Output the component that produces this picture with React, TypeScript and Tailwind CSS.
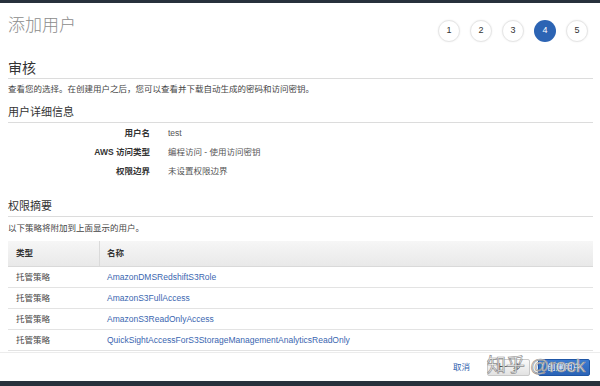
import React from 'react';

const policies = [
  'AmazonDMSRedshiftS3Role',
  'AmazonS3FullAccess',
  'AmazonS3ReadOnlyAccess',
  'QuickSightAccessForS3StorageManagementAnalyticsReadOnly',
];

const details = [
  { label: '用户名', value: 'test' },
  { label: 'AWS 访问类型', value: '编程访问 - 使用访问密钥' },
  { label: '权限边界', value: '未设置权限边界' },
];

function Steps({ current }: { current: number }) {
  return (
    <div className="flex gap-[10px]">
      {[1, 2, 3, 4, 5].map((n) => (
        <div
          key={n}
          className={`w-[22px] h-[22px] rounded-full flex items-center justify-center text-[9px] ${
            n === current
              ? 'bg-[#2c64b4] text-white'
              : 'bg-white text-[#333] border border-[#e6e6e6] shadow-[0_0_2px_rgba(0,0,0,0.08)]'
          }`}
        >
          {n}
        </div>
      ))}
    </div>
  );
}

export default function App() {
  return (
    <div
      className="relative w-[600px] h-[386px] bg-white flex flex-col overflow-hidden text-[#444]"
      style={{ fontFamily: '"Liberation Sans", "Noto Sans CJK SC", sans-serif' }}
    >
      <div className="h-[3px] bg-[#28313c] shrink-0" />

      {/* header */}
      <div className="h-[47px] flex justify-between items-start pl-[8px] pr-[12px] shrink-0">
        <h1 className="mt-[11px] text-[17px] leading-[24px] text-[#8c8c8c] font-light">添加用户</h1>
        <div className="mt-[17px]">
          <Steps current={4} />
        </div>
      </div>

      <div className="flex-1 pl-[8px] pr-[7px]">
        <h2 className="pt-[8px] text-[14px] leading-[20px] text-[#333] border-b border-[#dcdcdc]">审核</h2>
        <p className="mt-[3px] text-[8.5px] leading-[14px] text-[#444]">
          查看您的选择。在创建用户之后，您可以查看并下载自动生成的密码和访问密钥。
        </p>

        <h3 className="mt-[8px] text-[11px] leading-[16px] pb-[2px] text-[#333] border-b border-[#dcdcdc]">用户详细信息</h3>
        <div className="mt-[1px]">
          {details.map((d) => (
            <div key={d.label} className="flex h-[19px] items-center text-[8.5px]">
              <div className="w-[142px] text-right font-semibold text-[#333]">{d.label}</div>
              <div className="ml-[18px] text-[#555]">{d.value}</div>
            </div>
          ))}
        </div>

        <h3 className="mt-[17px] text-[11px] leading-[16px] pb-[2px] text-[#333] border-b border-[#dcdcdc]">权限摘要</h3>
        <p className="mt-[4px] text-[8.5px] leading-[14px] text-[#444]">以下策略将附加到上面显示的用户。</p>

        <div className="mt-[6px] text-[8.5px]">
          <div className="flex h-[26px] bg-gradient-to-b from-[#f6f6f6] to-[#e9e9e9] border-b border-[#d9d9d9] font-semibold text-[#333]">
            <div className="w-[92px] flex items-center pl-[8px] border-r border-[#dadada]">类型</div>
            <div className="flex items-center pl-[7px]">名称</div>
          </div>
          {policies.map((p) => (
            <div key={p} className="flex h-[21px] items-center border-b border-[#e3e3e3]">
              <div className="w-[92px] pl-[8px] text-[#444]">托管策略</div>
              <div className="pl-[7px] text-[#3a66b0]">{p}</div>
            </div>
          ))}
        </div>
      </div>

      {/* footer */}
      <div className="h-[29px] shrink-0 border-t border-[#ececec] flex items-center justify-end pr-[10px] text-[8.5px]">
        <span className="text-[#2f62ad] mr-[17px]">取消</span>
        <button className="h-[17px] w-[43px] rounded-[2px] border border-[#c9c9c9] bg-gradient-to-b from-[#fafafa] to-[#e2e2e2] text-[#333]">
          上一步
        </button>
        <button className="ml-[8px] h-[17px] w-[52px] rounded-[2px] border border-[#1f56a6] bg-gradient-to-b from-[#3d7bd0] to-[#2a63b6] text-white">
          创建用户
        </button>
      </div>

      <div className="h-[5px] bg-[#28313c] shrink-0" />

      {/* watermark */}
      <div className="absolute left-[487px] top-[353px] flex items-baseline gap-[5px] text-[19px] leading-[26px] text-white/80 [-webkit-text-stroke:0.7px_#8f8f8f] pointer-events-none">
        <span>知乎</span>
        <span>@rock</span>
      </div>
    </div>
  );
}
